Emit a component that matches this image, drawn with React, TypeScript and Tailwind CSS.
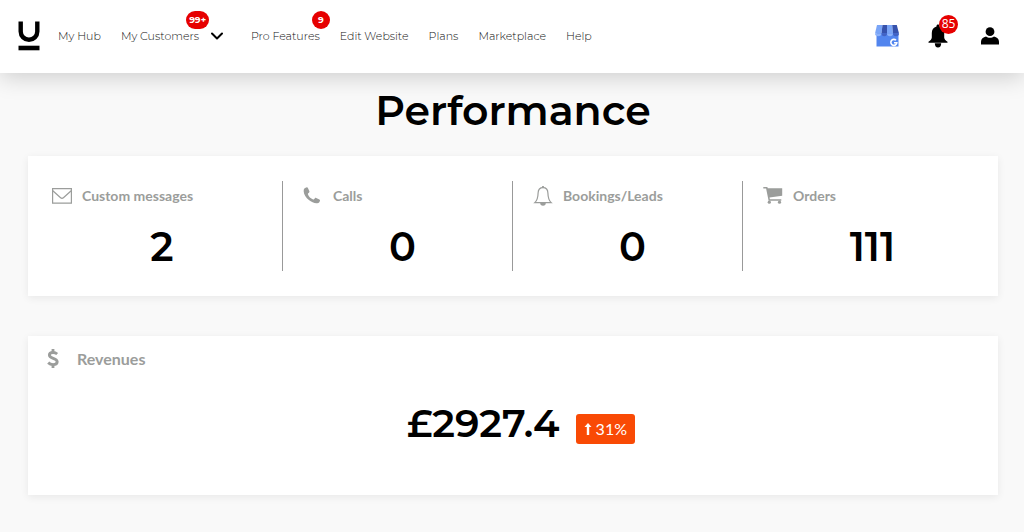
import type { ReactNode } from 'react'

interface NavItem {
  label: string
  badge?: string
  menu?: boolean
}

interface Stat {
  label: string
  value: string
  icon: ReactNode
}

const NAV_ITEMS: NavItem[] = [
  { label: 'My Hub' },
  { label: 'My Customers', badge: '99+', menu: true },
  { label: 'Pro Features', badge: '9' },
  { label: 'Edit Website' },
  { label: 'Plans' },
  { label: 'Marketplace' },
  { label: 'Help' },
]

function Logo() {
  return (
    <svg viewBox="0 0 22 30" className="h-[30px] w-[22px]" fill="none" stroke="#000">
      <path d="M2.700 0.500V10.500a8.300 8.300 0 0 0 16.600 0V0.500" strokeWidth="4.400" />
      <path d="M0.500 27h21" strokeWidth="4.600" />
    </svg>
  )
}

function ChevronIcon() {
  return (
    <svg viewBox="0 0 12 8" className="h-2 w-3" fill="none" stroke="#000" strokeWidth="2">
      <path d="M1 1.5l5 5 5-5" strokeLinecap="round" strokeLinejoin="round" />
    </svg>
  )
}

function ShopIcon() {
  return (
    <svg viewBox="0 0 26 24" className="h-6 w-[26px]">
      <path d="M2.500 9h22v13.500h-22z" fill="#5285ee" />
      <path d="M3 1h5.500L7.500 9.500H1z" fill="#7aa5f7" />
      <path d="M8.500 1H13v8.500H7.500z" fill="#3652ad" />
      <path d="M13 1h5.200l.8 8.500H13z" fill="#7aa5f7" />
      <path d="M18.200 1h4.600L25 9.500h-6z" fill="#3652ad" />
      <path d="M1 9.500h6.500a3.250 2.800 0 0 1-6.500 0zM13 9.500h6a3 2.800 0 0 1-6 0z" fill="#8cb2fa" />
      <path d="M7.500 9.500H13a2.750 2.800 0 0 1-5.500 0zM19 9.500h6a3 2.800 0 0 1-6 0z" fill="#4263c4" />
      <path
        d="M22 16.300a3 3 0 1 0 .8 2.500h-2.800"
        fill="none"
        stroke="#fff"
        strokeWidth="1.600"
      />
    </svg>
  )
}

function SolidBellIcon() {
  return (
    <svg viewBox="0 0 20 24" className="h-6 w-5" fill="#000">
      <path d="M10 0.500c.9 0 1.500.6 1.500 1.500v.5c3 .8 4.700 3.300 4.700 6.500v4.500c0 1.600 1.200 2.700 3.300 4.300v.9H.5v-.9c2.100-1.600 3.300-2.700 3.300-4.300V9c0-3.200 1.700-5.700 4.700-6.500V2c0-.9.6-1.500 1.500-1.500z" />
      <path d="M6.800 19.200h6.400c0 2.600-1.200 4.400-3.200 4.400s-3.200-1.800-3.200-4.400z" />
    </svg>
  )
}

function UserIcon() {
  return (
    <svg viewBox="0 0 18 18" className="size-[18px]" fill="#000">
      <circle cx="9" cy="4.700" r="4.400" />
      <path d="M0 17.500v-2.700c0-3 2.200-4.800 5-5.400 1.100.8 2.400 1.300 4 1.300s2.900-.5 4-1.300c2.800.6 5 2.400 5 5.400v2.700z" />
    </svg>
  )
}

function EnvelopeIcon() {
  return (
    <svg viewBox="0 0 20 20" className="size-5" fill="none" stroke="currentColor" strokeWidth="1.200">
      <path d="M.6 2.600h18.800v14.500H.6z" />
      <path d="M.8 4.800l7.800 7c.8.700 2 .700 2.800 0l7.800-7" />
    </svg>
  )
}

function PhoneIcon() {
  return (
    <svg viewBox="0 0 20 20" className="size-5" fill="currentColor">
      <path d="M.9 3.300C1.300 2.200 2.800 1.200 4 1.200c.4 0 .7.300.9.800l1.500 3.300c.2.500 0 .9-.3 1.300C5.500 7.100 4.700 7.600 4.900 8.200c.8 2.300 2.800 4.300 5.200 5.300.6.200 1.300-.8 1.800-1.300.4-.3.800-.5 1.300-.2l3.200 1.600c.5.200.7.500.6.900-.2 1.500-1.300 2.600-2.700 2.800-2.800.3-5.800-1-8.400-3.200C3 11.900.8 8.500.7 5.500c0-.7 0-1.500.2-2.200z" />
    </svg>
  )
}

function BellIcon() {
  return (
    <svg viewBox="0 0 20 20" className="size-5" fill="none" stroke="currentColor" strokeWidth="1.200">
      <path d="M10 1.700c3 0 4.800 2.200 4.900 5.300.1 4.200.7 7.300 3.300 9.600H1.800C4.400 14.300 5 11.200 5.100 7c.1-3.100 1.900-5.300 4.900-5.300z" />
      <path d="M10 0v2" strokeWidth="1.800" />
      <path d="M7.200 17h5.600a2.800 2.800 0 0 1-5.600 0z" fill="currentColor" stroke="none" />
    </svg>
  )
}

function CartIcon() {
  return (
    <svg viewBox="0 0 20 20" className="size-5" fill="currentColor">
      <path d="M.3 1h4l.5 1.200H19.200v7.600L6.500 11.600l.4 1.600h11.400v1.500H5.600L3.100 2.600H.3z" />
      <circle cx="6.300" cy="16.200" r="1.600" />
      <circle cx="16.500" cy="16.200" r="1.600" />
    </svg>
  )
}

function DollarIcon() {
  return (
    <svg viewBox="0 0 12 20" className="h-5 w-3" fill="none" stroke="currentColor">
      <path
        d="M10.200 5C9 4 7.600 3.500 6.100 3.500 4 3.500 2.400 4.400 2.400 6c0 4 7.800 2.600 7.800 6.800 0 1.800-1.800 2.800-4.100 2.800-1.900 0-3.600-.7-4.900-2"
        strokeWidth="2.900"
      />
      <path d="M6 0v3.500M6 15.500v3.500" strokeWidth="2.800" />
    </svg>
  )
}

function ArrowUpIcon() {
  return (
    <svg viewBox="0 0 8 12" className="h-3 w-2" fill="#fff">
      <path d="M4 0l3.500 4H5.200v8H2.800V4H.5z" />
    </svg>
  )
}

const STATS: Stat[] = [
  { label: 'Custom messages', value: '2', icon: <EnvelopeIcon /> },
  { label: 'Calls', value: '0', icon: <PhoneIcon /> },
  { label: 'Bookings/Leads', value: '0', icon: <BellIcon /> },
  { label: 'Orders', value: '111', icon: <CartIcon /> },
]

function Header() {
  return (
    <header className="flex h-[73px] items-center justify-between bg-white pr-[25px] pb-0.5 pl-[18px] shadow-[0_4px_22px_rgba(0,0,0,0.18)]">
      <div className="flex items-center">
        <a href="#" aria-label="Home">
          <Logo />
        </a>
        <nav className="ml-[18px] flex items-center gap-5 font-[Montserrat,sans-serif] text-[11px] leading-4 font-light text-[#111]">
          {NAV_ITEMS.map((item) => (
            <div key={item.label} className="flex items-center">
              <a href="#" className="relative">
                {item.label}
                {item.badge && (
                  <span className="absolute -top-[17px] -right-[10px] flex h-[18px] min-w-[18px] items-center justify-center rounded-full bg-[#e60000] px-[3px] text-[9px] font-bold text-white">
                    {item.badge}
                  </span>
                )}
              </a>
              {item.menu && (
                <button className="mr-2 ml-3" aria-label="Open customers menu">
                  <ChevronIcon />
                </button>
              )}
            </div>
          ))}
        </nav>
      </div>

      <div className="flex items-center gap-7">
        <button aria-label="Business profile">
          <ShopIcon />
        </button>
        <button className="relative" aria-label="Notifications">
          <SolidBellIcon />
          <span className="absolute -top-[9px] -right-[10px] flex size-[19px] items-center justify-center rounded-full bg-[#e60000] font-['Open_Sans',sans-serif] text-[12px] text-white">
            85
          </span>
        </button>
        <button className="ml-[5px]" aria-label="Account">
          <UserIcon />
        </button>
      </div>
    </header>
  )
}

export default function App() {
  return (
    <div className="min-h-screen bg-[#f9f9f9] font-[Lato,sans-serif] text-black">
      <Header />

      <main className="pr-[26px] pb-9 pl-7">
        <h1 className="pt-3 text-center font-[Montserrat,sans-serif] text-[41px] leading-[50px] font-semibold">
          Performance
        </h1>

        <section className="mt-[21px] grid grid-cols-[231fr_230fr_230fr_239fr] bg-white py-[25px] pr-4 pl-6 shadow-[0_2px_8px_rgba(0,0,0,0.07)]">
          {STATS.map((stat) => (
            <div
              key={stat.label}
              className="h-[90px] border-r border-[#999] pr-2.5 pl-5 first:pl-0 last:border-r-0 last:pr-0"
            >
              <div className="flex items-center gap-2.5 pt-[5px] text-[#9b9d9b]">
                {stat.icon}
                <h2 className="text-[14px] leading-5 font-bold">{stat.label}</h2>
              </div>
              <p className="mt-4 text-center font-[Montserrat,sans-serif] text-[40px] leading-[50px] font-semibold">
                {stat.value}
              </p>
            </div>
          ))}
        </section>

        <section className="mt-10 h-[159px] bg-white px-[19px] pt-[11px] shadow-[0_2px_8px_rgba(0,0,0,0.07)]">
          <div className="flex items-center gap-[18px] text-[#9b9d9b]">
            <DollarIcon />
            <h2 className="text-[16px] leading-6 font-bold">Revenues</h2>
          </div>
          <div className="mt-[27px] flex items-center justify-center gap-4 pl-4">
            <p className="font-[Montserrat,sans-serif] text-[39px] leading-[50px] font-semibold">
              £2927.4
            </p>
            <span className="mt-3 flex h-[30px] items-center gap-1 rounded-[3px] bg-[#f94a05] px-2 text-[16px] text-white">
              <ArrowUpIcon />
              31%
            </span>
          </div>
        </section>
      </main>
    </div>
  )
}
